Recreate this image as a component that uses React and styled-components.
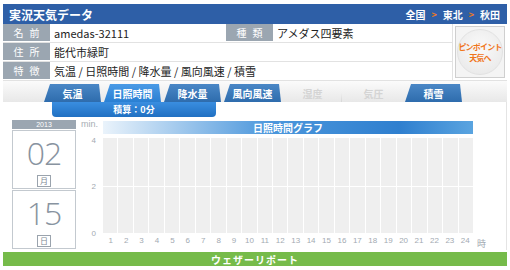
import React from "react";
import styled, { createGlobalStyle } from "styled-components";

const Global = createGlobalStyle`
  body {
    margin: 0;
    background: #fff;
    font-family: "Noto Sans CJK JP", "Noto Sans", sans-serif;
  }
`;

const Page = styled.div`
  width: 504px;
  padding: 4px 3px 0 3px;
`;

const Header = styled.div`
  height: 20px;
  background: #2e5fa7;
  display: flex;
  align-items: center;
  justify-content: space-between;
  padding: 0 7px 0 6px;
  color: #fff;
  font-weight: bold;
`;

const HeaderTitle = styled.div`
  font-size: 12px;
`;

const Crumbs = styled.div`
  font-size: 10px;
  display: flex;
  gap: 6px;
  align-items: center;
`;

const Arrow = styled.span`
  color: #f07a1e;
  font-size: 9px;
`;

const Info = styled.div`
  display: flex;
  border-bottom: 1px solid #e2e2e2;
`;

const Rows = styled.div`
  flex: 1;
`;

const Row = styled.div`
  display: flex;
  height: 18px;
  border-bottom: 1px solid #e2e2e2;
  &:last-child {
    border-bottom: none;
  }
`;

const Label = styled.div`
  width: 47px;
  background: #9ba6b1;
  color: #fff;
  font-size: 10px;
  letter-spacing: 6px;
  display: flex;
  align-items: center;
  justify-content: center;
  padding-left: 6px;
  box-sizing: border-box;
  border-bottom: 1px solid #fff;
`;

const Value = styled.div`
  width: ${(p) => p.w || "auto"};
  flex: ${(p) => (p.w ? "none" : 1)};
  font-size: 11px;
  color: #222;
  display: flex;
  align-items: center;
  padding-left: 4px;
`;

const PinCell = styled.div`
  width: 54px;
  display: flex;
  align-items: center;
  justify-content: center;
  border-left: 1px solid #e2e2e2;
`;

const PinButton = styled.div`
  width: 48px;
  height: 50px;
  border: 1px solid #cfcfcf;
  background: #f4f4f4;
  display: flex;
  align-items: center;
  justify-content: center;
`;

const PinCircle = styled.div`
  width: 44px;
  height: 44px;
  border-radius: 50%;
  background: radial-gradient(circle at 50% 40%, #fafafa, #e6e6e6);
  border: 1px solid #e2e2e2;
  color: #f0761c;
  font-weight: bold;
  font-size: 8px;
  line-height: 11px;
  text-align: center;
  display: flex;
  flex-direction: column;
  align-items: center;
  justify-content: center;
  letter-spacing: -0.8px;
  white-space: nowrap;
`;

const TabBar = styled.div`
  height: 19px;
  padding-top: 2px;
  background: linear-gradient(#fbfbfb, #e8e8e8);
  display: flex;
  align-items: flex-end;
  gap: 3px;
  padding-left: 41px;
`;

const Tab = styled.div`
  width: 57px;
  height: 18px;
  display: flex;
  align-items: center;
  justify-content: center;
  font-size: 10px;
  font-weight: bold;
  color: ${(p) => (p.off ? "#d4d4d4" : "#fff")};
  background: ${(p) =>
    p.off
      ? "transparent"
      : p.active
      ? "linear-gradient(#4a9ae6, #2a7fd2)"
      : "linear-gradient(#4a87c6, #2e6cad)"};
  border-radius: 5px 2px 0 0;
  clip-path: polygon(6px 0, calc(100% - 2px) 0, 100% 100%, 0 100%);
  border-right: ${(p) => (p.sep ? "1px solid #d8d8d8" : "none")};
`;

const Content = styled.div`
  background: #fff;
  border-right: 1px solid #e4e4e4;
  padding-bottom: 1px;
`;

const SumBar = styled.div`
  margin-left: 49px;
  width: 164px;
  height: 15px;
  background: linear-gradient(#3a8ee0, #2070c2);
  border-radius: 0 0 4px 4px;
  color: #fff;
  font-size: 9px;
  font-weight: bold;
  display: flex;
  align-items: center;
  justify-content: center;
`;

const Body = styled.div`
  display: flex;
  padding: 3px 0 0 9px;
`;

const DateCol = styled.div`
  width: 64px;
  display: flex;
  flex-direction: column;
  gap: 1px;
`;

const Year = styled.div`
  height: 9px;
  background: #9ba6b1;
  color: #fff;
  font-family: "Liberation Sans", sans-serif;
  font-size: 7px;
  line-height: 9px;
  text-align: center;
`;

const DateBox = styled.div`
  height: 59px;
  border: 1px solid #c3c9cf;
  display: flex;
  flex-direction: column;
  align-items: center;
  box-sizing: border-box;
  padding-bottom: 1px;
`;

const Big = styled.div`
  font-family: "Open Sans", "Liberation Sans", sans-serif;
  font-weight: 300;
  font-size: 32px;
  line-height: 44px;
  height: 44px;
  color: #8893a0;
  letter-spacing: -1px;
`;

const Unit = styled.div`
  margin-top: auto;
  width: 12px;
  height: 10px;
  border: 1px solid #9aa3ad;
  color: #7d8893;
  font-size: 8px;
  line-height: 10px;
  text-align: center;
`;

const Chart = styled.div`
  flex: 1;
  padding-left: 5px;
  display: grid;
  grid-template-columns: 22px 370px 20px;
  grid-template-rows: 16px 97px 14px;
`;

const MinLabel = styled.div`
  font-family: "Liberation Sans", sans-serif;
  font-size: 9px;
  color: #a6adb4;
  line-height: 9px;
`;

const TitleBar = styled.div`
  height: 13px;
  margin-top: 1px;
  background: linear-gradient(90deg, #eaf3fb, #4c97dc 45%, #2f7fcf 80%, #5aa4e0);
  color: #fff;
  font-weight: bold;
  font-size: 10px;
  display: flex;
  align-items: center;
  justify-content: center;
`;

const YAxis = styled.div`
  position: relative;
  font-family: "Liberation Sans", sans-serif;
  font-size: 8px;
  color: #a3aab2;
`;

const YTick = styled.span`
  position: absolute;
  right: 7px;
  top: ${(p) => p.top}px;
`;

const Grid = styled.div`
  display: grid;
  grid-template-columns: repeat(24, 1fr);
  gap: 1px;
  position: relative;
  margin-top: 2px;
  &::after {
    content: "";
    position: absolute;
    left: 0;
    right: 0;
    top: 48px;
    height: 1px;
    background: #fff;
  }
`;

const Col = styled.div`
  background: #efefef;
`;

const XAxis = styled.div`
  display: grid;
  grid-template-columns: repeat(24, 1fr);
  font-family: "Liberation Sans", sans-serif;
  font-size: 8px;
  color: #a3aab2;
  text-align: center;
  padding-top: 3px;
`;

const Hour = styled.div`
  font-size: 9px;
  color: #a3aab2;
  padding: 4px 0 0 4px;
`;

const Report = styled.div`
  height: 14px;
  margin-top: 2px;
  background: #76bb4a;
  color: #fff;
  font-size: 10px;
  font-weight: bold;
  display: flex;
  align-items: center;
  justify-content: center;
  letter-spacing: 1px;
`;

const tabs = [
  { t: "気温" },
  { t: "日照時間", active: true },
  { t: "降水量" },
  { t: "風向風速" },
  { t: "湿度", off: true, sep: true },
  { t: "気圧", off: true },
  { t: "積雪" },
];

export default function App() {
  const hours = Array.from({ length: 24 }, (_, i) => i + 1);
  return (
    <Page>
      <Global />
      <Header>
        <HeaderTitle>実況天気データ</HeaderTitle>
        <Crumbs>
          全国 <Arrow>&gt;</Arrow> 東北 <Arrow>&gt;</Arrow> 秋田
        </Crumbs>
      </Header>
      <Info>
        <Rows>
          <Row>
            <Label>名前</Label>
            <Value w="172px">amedas-32111</Value>
            <Label>種類</Label>
            <Value>アメダス四要素</Value>
          </Row>
          <Row>
            <Label>住所</Label>
            <Value>能代市緑町</Value>
          </Row>
          <Row>
            <Label>特徴</Label>
            <Value>気温 / 日照時間 / 降水量 / 風向風速 / 積雪</Value>
          </Row>
        </Rows>
        <PinCell>
          <PinButton>
            <PinCircle>
              <span>ピンポイント</span>
              <span>天気へ</span>
            </PinCircle>
          </PinButton>
        </PinCell>
      </Info>
      <TabBar>
        {tabs.map((tb) => (
          <Tab key={tb.t} active={tb.active} off={tb.off} sep={tb.sep}>
            {tb.t}
          </Tab>
        ))}
      </TabBar>
      <Content>
        <SumBar>積算：0分</SumBar>
        <Body>
          <DateCol>
            <Year>2013</Year>
            <DateBox>
              <Big>02</Big>
              <Unit>月</Unit>
            </DateBox>
            <DateBox>
              <Big>15</Big>
              <Unit>日</Unit>
            </DateBox>
          </DateCol>
          <Chart>
            <MinLabel>min.</MinLabel>
            <TitleBar>日照時間グラフ</TitleBar>
            <div />
            <YAxis>
              <YTick top={0}>4</YTick>
              <YTick top={46}>2</YTick>
              <YTick top={93}>0</YTick>
            </YAxis>
            <Grid>
              {hours.map((h) => (
                <Col key={h} />
              ))}
            </Grid>
            <div />
            <div />
            <XAxis>
              {hours.map((h) => (
                <span key={h}>{h}</span>
              ))}
            </XAxis>
            <Hour>時</Hour>
          </Chart>
        </Body>
      </Content>
      <Report>ウェザーリポート</Report>
    </Page>
  );
}
